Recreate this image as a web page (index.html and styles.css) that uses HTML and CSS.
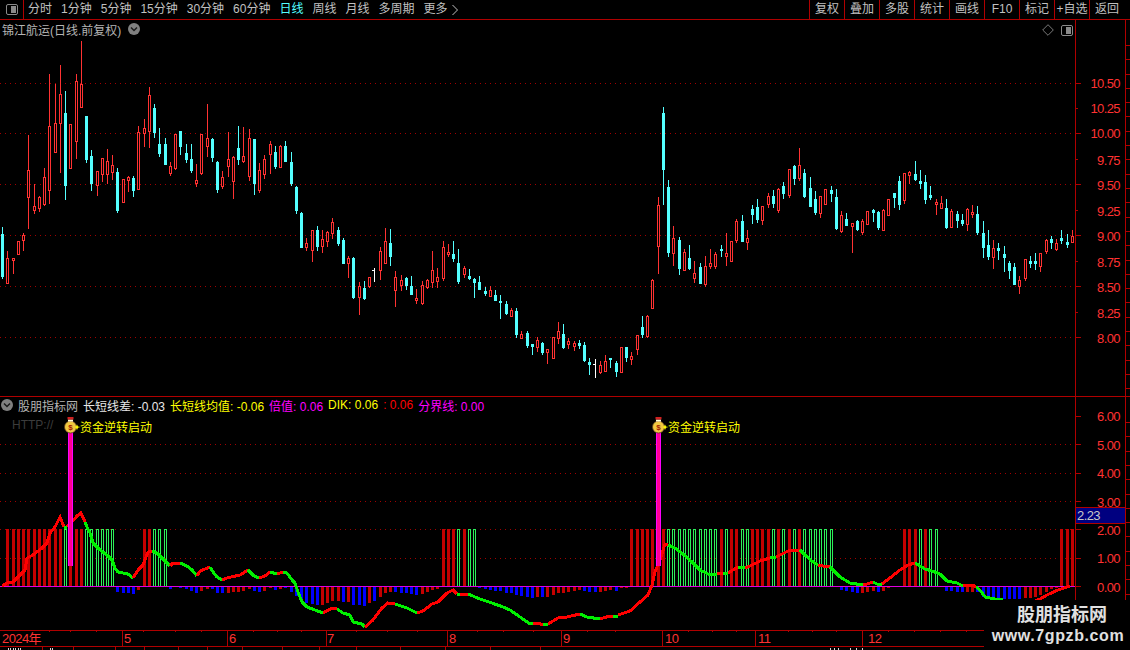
FILE: index.html
```html
<!DOCTYPE html>
<html lang="zh">
<head>
<meta charset="utf-8">
<title>锦江航运</title>
<link rel="stylesheet" href="styles.css">
</head>
<body>
<div class="app">
  <header class="toolbar">
    <div class="side-cell"><span class="panel-icon"><i></i></span></div>
    <nav class="periods">
      <span>分时</span><span>1分钟</span><span>5分钟</span><span>15分钟</span><span>30分钟</span><span>60分钟</span>
      <span class="active">日线</span><span>周线</span><span>月线</span><span>多周期</span>
      <span class="more">更多<svg class="more-arrow" viewBox="0 0 8 12"><path d="M1.5 1l5 5-5 5"/></svg></span>
    </nav>
    <div class="tools">
      <span>复权</span><span>叠加</span><span>多股</span><span>统计</span><span>画线</span><span>F10</span><span>标记</span><span>+自选</span><span class="last">返回</span>
    </div>
  </header>

  <section class="pane main-pane">
    <svg class="chart" id="mainChart" viewBox="0 20 1075 376" width="1075" height="376"></svg>
    <svg class="axis" id="mainAxis" viewBox="1075 20 55 376" width="55" height="376">
      <text x="1120" y="88">10.50</text><text x="1120" y="113">10.25</text><text x="1120" y="138">10.00</text>
      <text x="1120" y="164.500">9.75</text><text x="1120" y="189.500">9.50</text><text x="1120" y="215.500">9.25</text>
      <text x="1120" y="240.500">9.00</text><text x="1120" y="266.500">8.75</text><text x="1120" y="291.500">8.50</text>
      <text x="1120" y="317.500">8.25</text><text x="1120" y="342.500">8.00</text>
    </svg>
    <div class="pane-title">
      <span>锦江航运(日线.前复权)</span>
      <span class="round-icon"><svg viewBox="0 0 12 12"><path d="M3 4.500l3 3 3-3"/></svg></span>
    </div>
    <div class="pane-tools">
      <svg class="diamond" viewBox="0 0 12 12"><path d="M6 .7L11.300 6 6 11.300.7 6z"/></svg>
      <span class="panel-icon"><i></i></span>
    </div>
  </section>

  <section class="pane sub-pane">
    <svg class="chart" id="subChart" viewBox="0 397 1075 233" width="1075" height="233"></svg>
    <svg class="axis" id="subAxis" viewBox="1075 397 55 233" width="55" height="233">
      <text x="1120" y="421">6.00</text><text x="1120" y="449.500">5.00</text><text x="1120" y="478">4.00</text>
      <text x="1120" y="506.500">3.00</text><text x="1120" y="535">2.00</text><text x="1120" y="563">1.00</text>
      <text x="1120" y="591.500">0.00</text>
    </svg>
    <div class="ind-title">
      <span class="round-icon"><svg viewBox="0 0 12 12"><path d="M3 4.500l3 3 3-3"/></svg></span>
      <span class="ind-name">股朋指标网</span>
      <span class="white">长短线差: -0.03</span>
      <span class="yellow">长短线均值: -0.06</span>
      <span class="magenta">倍值: 0.06</span>
      <span class="yellow">DIK: 0.06</span>
      <span class="red">: 0.06</span>
      <span class="magenta">分界线: 0.00</span>
    </div>
    <div class="http">HTTP://</div>
    <div class="signal signal-a">资金逆转启动</div>
    <div class="signal signal-b">资金逆转启动</div>
    <div class="cursor-value">2.23</div>
  </section>

  <section class="date-bar">
    <svg id="dateBar" class="date-svg" viewBox="0 630 1130 17" width="1130" height="17">
      <text x="2" y="643">2024年</text><text x="124" y="643">5</text><text x="229" y="643">6</text>
      <text x="327" y="643">7</text><text x="449" y="643">8</text><text x="563" y="643">9</text>
      <text x="665" y="643">10</text><text x="758" y="643">11</text><text x="868" y="643">12</text>
    </svg>
  </section>

  <svg id="tabStrip" class="tab-strip" viewBox="0 647 1130 3" width="1130" height="3"></svg>

  <aside class="watermark">
    <div class="wm-name">股朋指标网</div>
    <div class="wm-url">www.7gpzb.com</div>
  </aside>
</div>
<script src="app.js"></script>
</body>
</html>
```

FILE: styles.css
```css
* { box-sizing: border-box; }
html, body { margin: 0; padding: 0; background: #000; }
body { font-family: "Liberation Sans", "Noto Sans CJK SC", sans-serif; font-size: 12px; color: #c0c0c0; }
.app { position: relative; width: 1130px; height: 650px; overflow: hidden; background: #000; display: flex; flex-direction: column; }

.toolbar { height: 20px; flex: none; display: flex; align-items: stretch; border-bottom: 1px solid #b00000; }
.side-cell { width: 24px; flex: none; border-right: 1px solid #b00000; display: flex; align-items: center; justify-content: center; }
.panel-icon { width: 12px; height: 11px; border: 1px solid #8a8a8a; border-radius: 2px; display: flex; justify-content: flex-end; padding: 1px; }
.panel-icon i { display: block; width: 5px; background: #8a8a8a; }
.periods { display: flex; align-items: center; gap: 9px; padding-left: 4px; line-height: 19px; }
.periods .active { color: #54ffff; }
.more { display: flex; align-items: center; gap: 3px; }
.more-arrow { width: 8px; height: 12px; fill: none; stroke: #c0c0c0; stroke-width: 1; }
.tools { margin-left: auto; display: flex; }
.tools span { width: 35px; text-align: center; line-height: 19px; border-left: 1px solid #b00000; }
.tools .last { width: 41px; padding-right: 6px; }

.pane { position: relative; flex: none; display: flex; }
.main-pane { height: 377px; border-bottom: 1px solid #b00000; }
.sub-pane { height: 233px; }
.chart, .axis, .date-svg, .tab-strip { display: block; flex: none; }
.axis text { font-size: 13px; letter-spacing: -.6px; fill: #ff3232; text-anchor: end; }

.pane-title { position: absolute; left: 2px; top: 0; height: 18px; display: flex; align-items: center; gap: 7px; color: #b4b4b4; }
.round-icon { width: 12px; height: 12px; border-radius: 50%; background: #808080; display: block; flex: none; }
.round-icon svg { display: block; width: 12px; height: 12px; fill: none; stroke: #1a1a1a; stroke-width: 1.500; }
.pane-tools { position: absolute; left: 1042px; top: 4px; display: flex; align-items: center; gap: 7px; }
.diamond { width: 12px; height: 12px; fill: none; stroke: #7a7a7a; stroke-width: 1; }

.ind-title { position: absolute; left: 1px; top: 0; height: 16px; display: flex; align-items: center; white-space: nowrap; }
.ind-title .ind-name { margin-left: 5px; margin-right: 5px; color: #b4b4b4; }
.ind-title span + span + span { margin-right: 5px; }
.white { color: #e8e8e8; }
.yellow { color: #ffff00; }
.magenta { color: #ff00ff; }
.red { color: #ff0000; }
.http { position: absolute; left: 12px; top: 21px; color: #3c3c3c; font-size: 12px; line-height: 14px; }
.signal { position: absolute; top: 23px; color: #ffff00; line-height: 16px; }
.signal-a { left: 80px; }
.signal-b { left: 668px; }
.cursor-value { position: absolute; left: 1076px; top: 110px; width: 49px; height: 17px; padding-left: 1px; background: #000080; border-top: 1px solid #b00000; border-bottom: 1px solid #b00000; color: #c8c8c8; font-size: 13px; letter-spacing: -.6px; line-height: 15px; }

.date-bar { height: 17px; flex: none; }
.date-svg text { font-size: 13px; letter-spacing: -.6px; fill: #ff3232; }
.tab-strip { flex: none; }
.tab-mark { fill: #d8d8d8; }

.watermark { position: absolute; left: 984px; top: 600px; width: 146px; height: 50px; background: #000; text-align: center; color: #e0e0e0; font-weight: 700; }
.wm-name { font-size: 18px; line-height: 24px; margin-top: 3px; padding-left: 10px; }
.wm-url { font-size: 16px; line-height: 18px; letter-spacing: .6px; padding-left: 2px; }

.grid { stroke: #a00000; stroke-width: 1; stroke-dasharray: 1 4; }
.wick-r, .tick { stroke: #ff3232; stroke-width: 1; }
.wick-c { stroke: #54ffff; stroke-width: 1; }
.wick-w { stroke: #ffffff; stroke-width: 1; }
.body-r { fill: #000; stroke: #ff3232; stroke-width: 1; }
.body-c { fill: #54ffff; }
.axis-line { stroke: #b00000; stroke-width: 1; }
.bar-r { fill: #c40000; }
.bar-g { fill: none; stroke: #2cf05a; stroke-width: 1; }
.bar-b { fill: #0000ff; }
.zero { stroke: #e000e0; stroke-width: 1; }
.line-r, .line-g { fill: none; stroke-width: 3; stroke-linejoin: miter; shape-rendering: crispEdges; }
.line-r { stroke: #ff0000; }
.line-g { stroke: #00f000; }
.pole-o { fill: #ff00ff; }
.pole-i { fill: #ff0090; }
.bag { fill: #f0c840; stroke: #5a4020; stroke-width: .8; }
.bag-top { fill: #d02020; }
.bag-neck { fill: #ffffd0; }
.bag-sign { font-size: 8px; font-weight: 700; fill: #a02000; text-anchor: middle; font-family: "Liberation Sans", sans-serif; }
.star { fill: #ffff00; }
```

FILE: app.js
```js
var NS = "http://www.w3.org/2000/svg";
function el(parent, tag, cls, attrs) {
  var e = document.createElementNS(NS, tag);
  if (cls) e.setAttribute("class", cls);
  for (var k in attrs) e.setAttribute(k, attrs[k]);
  parent.appendChild(e);
  return e;
}
function vline(p, cls, x, y1, y2) {
  if (y2 > y1) el(p, "line", cls, { x1: x + .5, x2: x + .5, y1: y1, y2: y2 });
}
function hline(p, cls, x1, x2, y) {
  el(p, "line", cls, { x1: x1, x2: x2, y1: y + .5, y2: y + .5 });
}

/* type+x, high, top, bottom, low */
var candles = "c2,227,234,276,278 r7,251,258,283,283 r13,258,258,260,273 r18,241,241,254,254 r23,233,235,240,250 r28,135,170,197,228 r34,184,206,210,213 r39,196,197,208,211 r44,168,177,204,205 r49,74,126,190,203 r55,84,123,152,152 r60,65,94,123,172 c65,91,113,185,199 r70,124,124,168,168 r76,74,81,141,158 r81,41,84,107,107 c86,116,116,159,162 c91,150,156,183,190 r97,171,171,185,195 r102,158,158,174,181 r107,149,161,174,183 r112,155,165,172,179 c117,168,172,210,212 r123,179,179,202,202 r128,176,177,180,191 c133,176,178,190,196 r138,126,132,189,189 r144,119,128,133,146 r149,87,95,131,147 c154,104,108,132,137 c159,128,144,153,156 c165,138,144,164,164 r170,162,166,173,175 r175,134,134,168,169 c180,131,131,146,154 c186,144,153,159,162 c191,144,159,170,172 r196,164,180,183,186 r201,134,134,173,174 r207,104,138,146,156 c212,138,139,157,161 c217,161,162,189,192 r222,171,177,186,188 r228,132,159,166,176 r233,156,157,181,198 c238,126,148,159,164 r243,127,156,161,162 r249,129,138,176,180 c254,139,139,183,194 r259,163,170,190,192 r264,155,159,174,178 r270,141,144,154,173 c275,146,152,166,168 r280,145,146,167,167 c285,141,146,161,161 c291,152,162,183,185 c296,186,187,210,213 " +
"c301,212,213,247,247 r306,238,243,247,250 r312,230,230,250,261 c317,226,230,246,250 r322,230,239,246,252 r327,231,232,241,246 r332,218,222,233,238 c338,227,230,243,245 c343,238,240,263,263 r348,256,258,263,277 c353,257,258,297,298 r359,282,286,297,314 c364,281,288,298,299 r369,277,277,286,287 w374,268,270,270,281 r380,247,251,270,279 r385,228,241,263,263 c390,229,243,256,265 r395,271,277,290,306 r401,275,280,285,290 c406,277,278,285,289 c411,276,286,294,294 r416,289,298,300,303 r422,281,285,303,304 r427,279,280,287,288 r432,251,270,282,287 r437,268,277,281,287 r443,241,247,278,280 r448,244,252,254,256 c453,241,254,258,261 c458,249,263,281,283 r464,266,268,274,277 c469,269,276,278,279 c474,278,279,282,297 c479,276,282,289,289 c485,287,291,293,295 r490,286,290,296,296 c495,290,295,300,300 c500,295,301,302,318 c506,301,304,313,314 r511,308,310,316,316 c516,308,311,334,337 r521,331,334,338,338 c527,331,333,345,347 c532,344,344,346,354 r537,337,340,347,351 c542,342,343,352,354 r547,349,349,352,363 r553,337,337,358,358 r558,322,331,338,343 c563,324,334,347,348 r568,338,341,344,348 r574,341,343,346,350 c579,340,343,345,348 c584,342,345,360,361 c589,358,362,364,374 w595,359,364,364,377 r600,361,365,372,373 r605,355,361,371,371 c610,358,358,359,367 c616,361,363,371,376 r621,347,347,372,372 c626,347,347,357,361 r631,352,356,359,364 r637,335,335,349,354 c642,316,327,334,337 r647,315,316,336,337 r652,279,280,308,308 " +
"r658,197,205,246,273 c663,107,113,169,204 c668,180,187,252,256 r673,226,238,253,265 c679,237,240,268,274 r684,249,252,270,270 c689,245,258,268,269 r694,261,273,278,282 c700,263,267,283,283 r705,256,266,284,286 r710,249,263,266,268 r715,252,254,266,268 c721,245,249,250,256 r726,233,253,256,265 r731,241,241,261,261 r736,219,221,240,242 c742,215,221,241,241 r747,230,238,242,249 c752,205,209,214,223 c757,199,207,219,222 r762,206,206,220,224 r768,193,196,204,207 c773,190,196,203,207 r778,188,189,210,212 c783,182,186,193,198 r789,169,169,195,197 c794,165,166,178,184 r799,148,165,178,180 c804,169,173,196,197 c810,177,188,206,206 c815,191,199,212,214 r820,196,196,213,217 r825,189,189,204,204 c831,186,190,193,201 c836,189,197,228,229 r841,211,215,231,232 c846,213,219,225,225 r852,223,223,226,252 c857,220,221,229,230 r862,219,221,232,234 r867,211,211,224,224 c873,209,210,212,221 c878,211,212,227,229 r883,209,210,230,230 r888,199,199,215,215 c894,193,193,197,207 c899,176,181,204,209 r904,173,173,200,203 r909,171,172,175,183 c915,161,174,179,180 c920,170,181,183,188 c925,175,182,199,203 c930,186,195,197,199 r936,199,202,204,214 r941,196,203,208,208 c946,199,208,227,228 r951,209,211,227,227 c957,211,214,220,227 c962,214,220,223,225 r967,208,209,224,230 r972,205,212,214,217 c977,206,214,232,234 c983,221,233,247,257 c988,230,245,256,259 r993,240,248,257,268 c998,243,248,250,259 c1004,246,254,257,271 c1009,261,263,270,278 c1014,263,267,284,284 r1019,276,280,286,293 r1025,259,259,278,280 c1030,256,261,263,267 c1035,253,261,263,269 r1040,253,253,266,271 r1046,239,240,251,253 c1051,236,239,242,248 r1056,239,243,249,250 c1061,230,238,240,243 c1067,234,242,244,247 r1072,230,236,242,242";

var main = document.getElementById("mainChart");
[83, 133, 184, 235, 286, 337].forEach(function (y) { hline(main, "grid", 0, 1075, y); });
candles.split(" ").forEach(function (s) {
  var t = s[0], v = s.slice(1).split(",").map(Number), x = v[0], hi = v[1], top = v[2], bot = v[3], lo = v[4];
  var w = "wick-" + t;
  vline(main, w, x, hi, top);
  vline(main, w, x, bot + 1, lo + 1);
  if (t === "r") el(main, "rect", "body-r", { x: x - .5, y: top + .5, width: 2, height: Math.max(bot - top, 1) });
  else if (t === "c") el(main, "rect", "body-c", { x: x - 1, y: top, width: 3, height: Math.max(bot - top + 1, 2) });
  else { vline(main, w, x, top, bot + 1); hline(main, w, x - 2, x + 1, top); }
});

var sub = document.getElementById("subChart");
[444, 473, 501, 529, 558].forEach(function (y) { hline(sub, "grid", 0, 1075, y); });

var upBars = "r7 r13 r18 r23 r28 r34 r39 r44 r49 r55 r60 g65 r70 r76 r81 g86 g91 g97 g102 g107 g112 r144 r149 g154 g159 g165 r443 r448 r453 g458 r464 g469 g474 r631 r637 r642 r647 r652 r658 r663 g668 g673 g679 g684 g689 g694 g700 g705 g710 g715 r721 g726 r731 r736 g742 g747 r752 r757 r762 r768 g773 r778 g783 r789 g794 r799 g804 g810 g815 g820 g825 g831 r904 r909 r915 g920 r925 g930 g936 r1061 r1067 r1072";
upBars.split(" ").forEach(function (s) {
  var x = +s.slice(1);
  if (s[0] === "r") el(sub, "rect", "bar-r", { x: x - 1, y: 529, width: 3, height: 58 });
  else el(sub, "rect", "bar-g", { x: x - .5, y: 529.5, width: 2, height: 57 });
});
var downBars = "b117,592 b123,593 b128,593 b133,594 r138,590 b170,589 r175,587 b180,588 b186,589 b191,591 b196,593 r201,591 r207,589 b212,589 b217,593 b222,593 r228,593 r233,592 r238,592 r243,591 r249,589 b254,591 b259,592 r264,591 r270,588 b275,590 r280,589 b285,588 b291,592 b296,596 b301,601 b306,603 b312,604 b317,605 r322,605 r327,603 r332,601 r338,601 b343,602 r348,602 b353,605 b359,605 b364,606 r369,603 b374,601 r380,597 r385,593 r390,592 b395,592 b401,593 b406,593 b411,594 b416,595 r422,594 r427,592 r432,590 r437,589 b479,588 b485,589 b490,590 b495,591 b500,591 b506,593 b511,593 b516,595 b521,596 b527,597 b532,598 r537,597 b542,597 r547,597 r553,595 r558,593 r563,593 r568,592 r574,591 r579,590 b584,591 b589,592 b595,592 r600,592 r605,591 r610,590 b616,591 r621,588 r626,588 b836,587 b841,590 b846,591 b852,592 b857,593 r862,593 r867,592 r873,591 b878,592 r883,591 r888,588 r894,587 b946,591 b951,591 b957,592 b962,592 r967,592 r972,592 b977,592 b983,597 b988,597 b993,597 b998,598 b1004,599 b1009,599 b1014,599 b1019,599 r1025,598 r1030,598 r1035,597 r1040,595 r1046,592 r1051,589 r1056,588";
downBars.split(" ").forEach(function (s) {
  var v = s.slice(1).split(",").map(Number);
  el(sub, "rect", s[0] === "r" ? "bar-r" : "bar-b", { x: v[0] - 1, y: 587, width: 3, height: v[1] - 587 });
});
hline(sub, "zero", 0, 1075, 586);

var line = [
  ["r", "2,586 7,583 13,582 20,575 25,570 27,558 33,555 42,548 47,543 50,533 55,527 60,517 64,527"],
  ["g", "64,527 67,527"],
  ["r", "67,527 72,522 77,516 81,513 85,522"],
  ["g", "85,522 87,527 90,533 93,543 100,550 107,555 112,560 115,568 118,572 128,574 133,578"],
  ["r", "133,578 138,570 143,565 148,552 152,551"],
  ["g", "152,551 157,553 163,559 170,566"],
  ["r", "170,566 173,563 180,563"],
  ["g", "180,563 187,566 192,570 197,576"],
  ["r", "197,576 200,571 210,567"],
  ["g", "210,567 213,572 217,577 222,580"],
  ["r", "222,580 227,578 240,575 248,570"],
  ["g", "248,570 254,576 259,578"],
  ["r", "259,578 265,576 270,572"],
  ["g", "270,572 277,574"],
  ["r", "277,574 283,572"],
  ["g", "283,572 287,573 292,580 295,583 298,592 302,602 307,607 315,610 323,613"],
  ["r", "323,613 332,608 337,609"],
  ["g", "337,609 343,613 350,615 353,622 362,624 365,627"],
  ["r", "365,627 373,620 382,608 388,603 395,604"],
  ["g", "395,604 407,608 417,613"],
  ["r", "417,613 423,611 432,604 438,602 447,593 453,590 457,594"],
  ["g", "457,594 460,594"],
  ["r", "460,594 468,594"],
  ["g", "468,594 480,599 492,603 503,607 510,610 520,617 530,624 533,623"],
  ["r", "533,623 538,623 543,625"],
  ["g", "543,625 548,624"],
  ["r", "548,624 558,618 567,617 580,614"],
  ["g", "580,614 587,617 600,619"],
  ["r", "600,619 610,616 613,616"],
  ["g", "613,616 618,617"],
  ["r", "618,615 630,611 640,602 648,595 652,585 655,572 660,560 665,544 668,545"],
  ["g", "668,545 675,548 683,554 692,562 700,570 708,574 717,574"],
  ["r", "717,574 723,573"],
  ["g", "723,573 728,573"],
  ["r", "728,573 733,570 738,567"],
  ["g", "738,567 745,568"],
  ["r", "745,568 750,566 760,561 770,558"],
  ["g", "770,558 776,557"],
  ["r", "776,557 782,554 790,550 800,550"],
  ["g", "800,550 805,555 813,562 818,565"],
  ["r", "818,565 823,566 830,567"],
  ["g", "830,567 833,570 840,577 850,583 863,585"],
  ["r", "863,585 867,584 873,582"],
  ["g", "873,582 877,584 882,584"],
  ["r", "882,584 890,578 900,570 908,565 915,563"],
  ["g", "915,563 925,569 932,571 940,574 947,581 957,583 963,586"],
  ["r", "963,586 966,585 973,585 976,587"],
  ["g", "976,587 980,590 985,597 995,599 1003,600"],
  ["r", "1030,603 1040,599 1047,595 1058,590 1070,586"]
];
line.forEach(function (s) { el(sub, "polyline", "line-" + s[0], { points: s[1] }); });

function signal(x) {
  el(sub, "rect", "pole-o", { x: x - 2, y: 420, width: 5, height: 146 });
  el(sub, "rect", "pole-i", { x: x - 1, y: 420, width: 3, height: 146 });
  var g = el(sub, "g", "", { transform: "translate(" + (x - 70) + " 0)" });
  el(g, "circle", "bag", { cx: 70.5, cy: 427, r: 6 });
  el(g, "rect", "bag-neck", { x: 68, y: 419.5, width: 5, height: 2 });
  el(g, "rect", "bag-top", { x: 67.5, y: 417, width: 6, height: 2.5 });
  var t = el(g, "text", "bag-sign", { x: 70.5, y: 430 });
  t.textContent = "$";
  el(g, "polygon", "star", { points: "77,424.500 78,426.500 80.500,427 78,427.800 77,430 76,427.800 74.500,427 76,426.500" });
}
signal(70);
signal(658);

function axis(id, y0, y1, ticks) {
  var a = document.getElementById(id);
  vline(a, "axis-line", 1075, y0, y1);
  vline(a, "axis-line", 1125, y0, y1);
  ticks.forEach(function (t) { hline(a, "axis-line", 1075, 1075 + t[1], t[0]); });
  for (var y = y0 + 25; y < y1; y += 14.3) hline(a, "axis-line", 1125, 1130, Math.round(y));
}
axis("mainAxis", 20, 396, [[83, 6], [108, 3], [133, 6], [159, 3], [184, 6], [210, 3], [235, 6], [261, 3], [286, 6], [312, 3], [337, 6]]);
axis("subAxis", 397, 630, [[416, 6], [444, 6], [473, 6], [501, 6], [529, 6], [558, 6], [586, 6]]);

var d = document.getElementById("dateBar");
hline(d, "axis-line", 0, 1130, 630);
hline(d, "axis-line", 0, 1130, 646);
vline(d, "axis-line", 1075, 630, 647);
vline(d, "axis-line", 1125, 630, 647);
[122, 227, 326, 447, 561, 662, 755, 862].forEach(function (x) { vline(d, "axis-line", x, 630, 646); });
[49, 70, 96, 143, 175, 201, 253, 277, 301, 356, 387, 417, 477, 503, 533, 587, 615, 688, 712, 736, 788, 812, 836, 888, 914, 940, 966].forEach(function (x) { vline(d, "axis-line", x, 630, 632); });

/* the tab row below the date bar is cut by the window: only separators and the tips of its labels show */
var tabs = document.getElementById("tabStrip");
[42, 73, 115, 144, 178, 207, 242, 282, 319, 356, 400, 445, 490, 540].forEach(function (x) { vline(tabs, "axis-line", x, 647, 650); });
[8, 10, 13, 15, 18, 20, 50, 52, 830, 834, 838, 850, 856, 862].forEach(function (x) { el(tabs, "rect", "tab-mark", { x: x, y: 648, width: 1, height: 2 }); });
```
